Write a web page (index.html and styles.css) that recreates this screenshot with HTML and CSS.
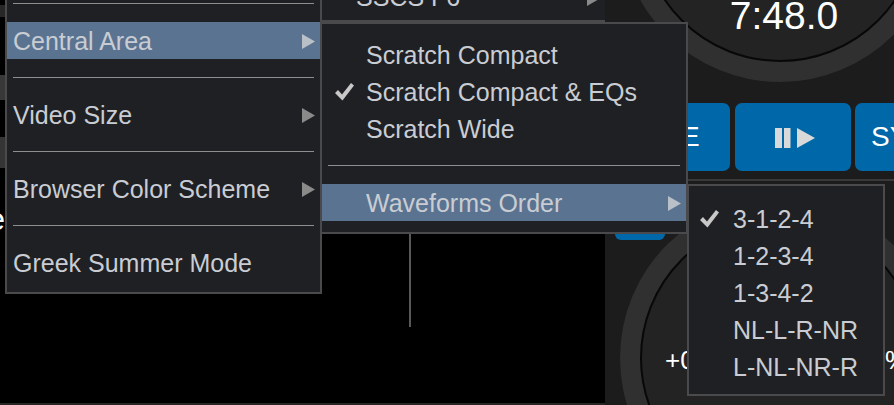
FILE: index.html
```html
<!DOCTYPE html>
<html>
<head>
<meta charset="utf-8">
<link rel="stylesheet" href="styles.css">
</head>
<body>
<div class="app">
  <div class="stage">
    <div class="strip">
      <div class="s s-black5"></div>
      <div class="s s-a"></div>
      <div class="s s-black58"></div>
      <div class="s s-b"></div>
      <div class="s s-black37"></div>
      <div class="s s-c"></div>
      <div class="s-text"><span>Name</span></div>
    </div>
    <div class="wave"><div class="divider"></div></div>
  </div>

  <div class="deck">
    <div class="platter platter-top">
      <div class="disc disc-top"><span class="time">7:48.0</span></div>
    </div>
    <div class="buttons">
      <div class="btn btn-cue">CUE</div>
      <div class="btn btn-play">
        <svg class="play-icon" width="40" height="20" viewBox="0 0 40 20"><rect x="0" y="0" width="7" height="20"/><rect x="9" y="0" width="6.5" height="20"/><polygon points="22,0 40,10 22,20"/></svg>
      </div>
      <div class="btn btn-sync">SYNC</div>
    </div>
    <div class="rule"></div>
    <div class="btn-small"></div>
    <div class="platter platter-bottom">
      <div class="disc disc-bottom"><div class="pitch"><span>+0.00</span><span>%</span></div></div>
    </div>
  </div>

  <div class="menu menu-upper">
    <div class="item item-upper">SSCS F6<svg class="arrow" width="13" height="15" viewBox="0 0 13 15"><polygon points="0,0 13,7.5 0,15"/></svg></div>
  </div>

  <div class="menu menu-main">
    <div class="item">Skin</div>
    <div class="sep"></div>
    <div class="item active">Central Area<svg class="arrow" width="13" height="15" viewBox="0 0 13 15"><polygon points="0,0 13,7.5 0,15"/></svg></div>
    <div class="sep"></div>
    <div class="item">Video Size<svg class="arrow" width="13" height="15" viewBox="0 0 13 15"><polygon points="0,0 13,7.5 0,15"/></svg></div>
    <div class="sep"></div>
    <div class="item">Browser Color Scheme<svg class="arrow" width="13" height="15" viewBox="0 0 13 15"><polygon points="0,0 13,7.5 0,15"/></svg></div>
    <div class="sep"></div>
    <div class="item">Greek Summer Mode</div>
  </div>

  <div class="menu menu-sub">
    <div class="item">Scratch Compact</div>
    <div class="item"><svg class="check" width="19" height="18" viewBox="0 0 19 18"><polygon points="0,10 3,7 7,11.5 16,0 19,2.5 7.5,17.5"/></svg>Scratch Compact &amp; EQs</div>
    <div class="item">Scratch Wide</div>
    <div class="sep"></div>
    <div class="item active">Waveforms Order<svg class="arrow" width="13" height="15" viewBox="0 0 13 15"><polygon points="0,0 13,7.5 0,15"/></svg></div>
  </div>

  <div class="menu menu-order">
    <div class="item"><svg class="check" width="19" height="18" viewBox="0 0 19 18"><polygon points="0,10 3,7 7,11.5 16,0 19,2.5 7.5,17.5"/></svg>3-1-2-4</div>
    <div class="item">1-2-3-4</div>
    <div class="item">1-3-4-2</div>
    <div class="item">NL-L-R-NR</div>
    <div class="item">L-NL-NR-R</div>
  </div>
</div>
</body>
</html>
```

FILE: styles.css
```css
* { box-sizing: border-box; }
html, body { margin: 0; padding: 0; }
body {
  background: #000;
  font-family: "Liberation Sans", Arial, sans-serif;
  width: 894px;
  height: 405px;
  overflow: hidden;
}
.app {
  position: relative;
  display: flex;
  width: 894px;
  height: 405px;
  overflow: hidden;
}

/* left stage */
.stage {
  display: flex;
  width: 605px;
  height: 405px;
  background: #000;
  border-bottom: 2px solid #262626;
}
.strip {
  width: 5px;
  display: flex;
  flex-direction: column;
}
.s { width: 5px; flex: none; }
.s-black5 { height: 5px; background: #000; }
.s-a { height: 12px; background: #272727; }
.s-black58 { height: 58px; background: #000; }
.s-b { height: 25px; background: #383838; }
.s-black37 { height: 37px; background: #000; }
.s-c { height: 31px; background: #353535; }
.s-text {
  height: 67px;
  width: 5px;
  overflow: hidden;
  display: flex;
  justify-content: flex-end;
  align-items: flex-end;
  color: #fff;
  font-size: 32px;
  line-height: 32px;
  white-space: nowrap;
}
.wave { flex: 1; }
.divider {
  margin-left: 404px;
  margin-top: 234px;
  width: 2px;
  height: 93px;
  background: #585858;
}

/* deck */
.deck {
  position: relative;
  width: 289px;
  height: 405px;
  background: #1c1c1c;
  overflow: hidden;
}
.platter {
  position: absolute;
  left: 15px;
  width: 320px;
  height: 320px;
  border-radius: 50%;
  background: #303030;
  padding: 20px;
}
.platter-top { top: -238px; }
.platter-bottom { top: 198px; }
.disc {
  width: 100%;
  height: 100%;
  border-radius: 50%;
  border: 2px solid #080808;
  background: #232323;
  display: flex;
  flex-direction: column;
  align-items: center;
}
.disc-top {
  justify-content: flex-end;
  padding-bottom: 24px;
  padding-left: 8px;
}
.disc-bottom { justify-content: center; }
.time {
  color: #fff;
  font-size: 39px;
  line-height: 40px;
}
.pitch {
  width: 243px;
  margin-left: 13px;
  margin-top: 4px;
  display: flex;
  justify-content: space-between;
  color: #fff;
  font-size: 26px;
  line-height: 30px;
}
.buttons {
  position: relative;
  display: flex;
  gap: 5px;
  padding: 103px 0 0 5px;
}
.btn {
  flex: none;
  height: 68px;
  border-radius: 7px;
  background: #0068a8;
  color: #fff;
  font-size: 28px;
  display: flex;
  align-items: center;
  justify-content: center;
}
.btn-cue { width: 120px; }
.btn-play { width: 116px; }
.btn-sync {
  width: 116px;
  margin-left: -1px;
  justify-content: flex-start;
  padding-left: 16px;
}
.play-icon { fill: #d9d9d9; margin-left: 4px; margin-top: 2px; }
.rule {
  margin-top: 8px;
  height: 2px;
  background: #393939;
}
.btn-small {
  position: relative;
  margin: 15px 0 0 10px;
  width: 50px;
  height: 44px;
  border-radius: 6px;
  background: #0068a8;
}

/* menus */
.menu {
  position: absolute;
  background: #1f2023;
  border: 2px solid #4a4a4d;
  color: #c9cdd3;
  font-size: 25px;
  padding: 12px 0 11px;
}
.item {
  position: relative;
  height: 37px;
  line-height: 37px;
  padding-top: 2px;
  display: flex;
  align-items: center;
  white-space: nowrap;
}
.item.active { background: #5a7391; }
.arrow {
  margin-left: auto;
  margin-right: 5px;
  fill: #8a8a8a;
  flex: none;
}
.item.active .arrow { fill: #b9c0c8; }
.sep {
  height: 1px;
  margin: 18px 6px;
  background: #8e8e8e;
}
.check {
  position: absolute;
  top: 10px;
  fill: #c8c8c8;
}

.menu-upper {
  z-index: 1;
  left: 320px;
  top: -60px;
  width: 285px;
  height: 82px;
  border-right: none;
  padding: 36px 0 0;
}
.item-upper { padding-left: 34px; }
.item-upper .arrow { margin-right: 5px; transform: translateY(1px); }

.menu-main {
  z-index: 2;
  left: 5px;
  top: -66px;
  width: 317px;
}
.menu-main .item { padding-left: 6px; }

.menu-sub {
  z-index: 3;
  left: 320px;
  top: 22px;
  width: 368px;
}
.menu-sub .item { padding-left: 44px; }
.menu-sub .check { left: 13px; }

.menu-order {
  z-index: 4;
  left: 687px;
  top: 184px;
  width: 198px;
  padding: 14px 0 9px;
}
.menu-order .item { padding-left: 44px; }
.menu-order .check { left: 11px; }
```
